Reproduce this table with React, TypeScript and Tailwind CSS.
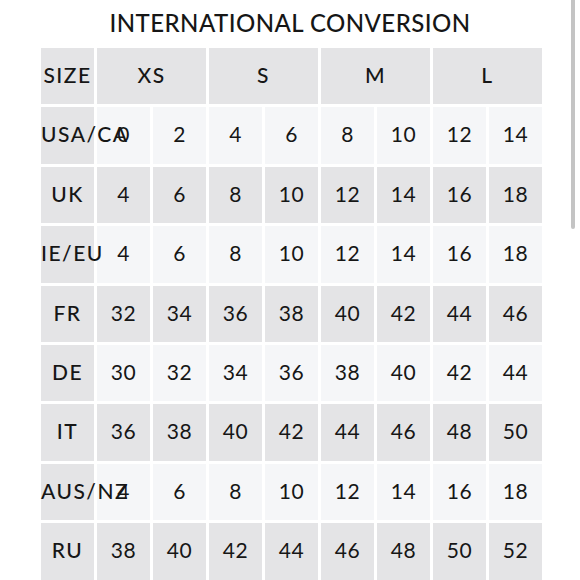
import React from "react";

interface SizeRow {
  label: string;
  values: number[];
}

const GROUPS = ["XS", "S", "M", "L"];

const ROWS: SizeRow[] = [
  { label: "USA/CA", values: [0, 2, 4, 6, 8, 10, 12, 14] },
  { label: "UK", values: [4, 6, 8, 10, 12, 14, 16, 18] },
  { label: "IE/EU", values: [4, 6, 8, 10, 12, 14, 16, 18] },
  { label: "FR", values: [32, 34, 36, 38, 40, 42, 44, 46] },
  { label: "DE", values: [30, 32, 34, 36, 38, 40, 42, 44] },
  { label: "IT", values: [36, 38, 40, 42, 44, 46, 48, 50] },
  { label: "AUS/NZ", values: [4, 6, 8, 10, 12, 14, 16, 18] },
  { label: "RU", values: [38, 40, 42, 44, 46, 48, 50, 52] },
];

export default function App() {
  return (
    <div className="relative w-[580px] h-[580px] overflow-hidden bg-white text-[#161616] font-['Lato','Open_Sans',sans-serif]">
      <div className="pt-[7px]">
        <h1 className="text-center text-[24px] leading-[32px] font-medium tracking-[0.45px]">
          INTERNATIONAL CONVERSION
        </h1>

        <table className="ml-[38px] mt-[6px] table-fixed w-[507px] border-separate border-spacing-x-[3px] border-spacing-y-[3px] text-[21px]">
          <colgroup>
            <col className="w-[53px]" />
            {Array.from({ length: 8 }).map((_, i) => (
              <col key={i} className="w-[53px]" />
            ))}
          </colgroup>
          <thead>
            <tr className="h-[56.4px]">
              <th className="bg-[#e4e4e6] p-0 pb-[3px] font-medium tracking-[1.5px] text-center whitespace-nowrap">
                SIZE
              </th>
              {GROUPS.map((g) => (
                <th
                  key={g}
                  colSpan={2}
                  className="bg-[#e4e4e6] p-0 pb-[3px] font-medium tracking-[1.5px] text-center"
                >
                  {g}
                </th>
              ))}
            </tr>
          </thead>
          <tbody>
            {ROWS.map((row, r) => {
              const cellBg = r % 2 === 0 ? "bg-[#f5f6f8]" : "bg-[#e4e4e6]";
              return (
                <tr key={row.label} className="h-[56.4px]">
                  <td className="bg-[#e4e4e6] p-0 pb-[3px] font-medium tracking-[1.5px] text-center whitespace-nowrap">
                    {row.label}
                  </td>
                  {row.values.map((v, i) => (
                    <td
                      key={i}
                      className={`${cellBg} p-0 pb-[3px] text-center tracking-[0.5px]`}
                    >
                      {v}
                    </td>
                  ))}
                </tr>
              );
            })}
          </tbody>
        </table>
      </div>

      {/* scrollbar thumb */}
      <div className="absolute top-0 right-[5px] w-[4px] h-[229px] rounded-b-full bg-[#c4c4c4]" />
    </div>
  );
}
